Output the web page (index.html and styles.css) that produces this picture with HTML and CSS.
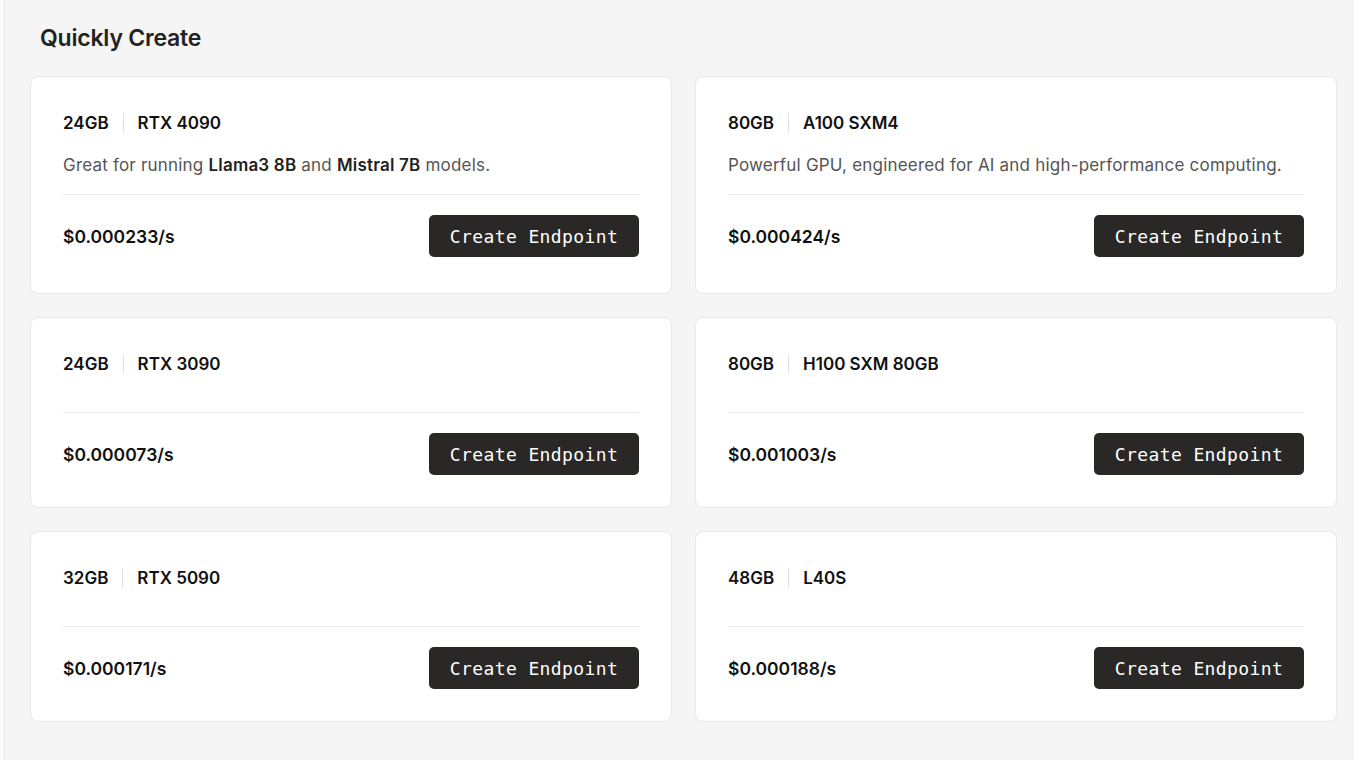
FILE: index.html
```html
<!DOCTYPE html>
<html lang="en">
<head>
  <meta charset="UTF-8">
  <meta name="viewport" content="width=device-width, initial-scale=1.0">
  <title>Quickly Create</title>
  <link rel="stylesheet" href="styles.css">
</head>
<body>

<div class="panel">
  <h2 class="panel-title">Quickly Create</h2>

  <div class="gpu-grid">
    <!-- row 1 -->
    <div class="gpu-card with-desc">
      <div class="gpu-head">
        <span class="gpu-mem">24GB</span>
        <span class="gpu-name">RTX 4090</span>
      </div>
      <p class="gpu-desc">Great for running <b>Llama3 8B</b> and <b>Mistral 7B</b> models.</p>
      <div class="gpu-foot">
        <span class="gpu-price">$0.000233/s</span>
        <button class="create-btn">Create Endpoint</button>
      </div>
    </div>

    <div class="gpu-card with-desc">
      <div class="gpu-head">
        <span class="gpu-mem">80GB</span>
        <span class="gpu-name">A100 SXM4</span>
      </div>
      <p class="gpu-desc">Powerful GPU, engineered for AI and high-performance computing.</p>
      <div class="gpu-foot">
        <span class="gpu-price">$0.000424/s</span>
        <button class="create-btn">Create Endpoint</button>
      </div>
    </div>

    <!-- row 2 -->
    <div class="gpu-card">
      <div class="gpu-head">
        <span class="gpu-mem">24GB</span>
        <span class="gpu-name">RTX 3090</span>
      </div>
      <p class="gpu-desc"></p>
      <div class="gpu-foot">
        <span class="gpu-price">$0.000073/s</span>
        <button class="create-btn">Create Endpoint</button>
      </div>
    </div>

    <div class="gpu-card">
      <div class="gpu-head">
        <span class="gpu-mem">80GB</span>
        <span class="gpu-name">H100 SXM 80GB</span>
      </div>
      <p class="gpu-desc"></p>
      <div class="gpu-foot">
        <span class="gpu-price">$0.001003/s</span>
        <button class="create-btn">Create Endpoint</button>
      </div>
    </div>

    <!-- row 3 -->
    <div class="gpu-card">
      <div class="gpu-head">
        <span class="gpu-mem">32GB</span>
        <span class="gpu-name">RTX 5090</span>
      </div>
      <p class="gpu-desc"></p>
      <div class="gpu-foot">
        <span class="gpu-price">$0.000171/s</span>
        <button class="create-btn">Create Endpoint</button>
      </div>
    </div>

    <div class="gpu-card">
      <div class="gpu-head">
        <span class="gpu-mem">48GB</span>
        <span class="gpu-name">L40S</span>
      </div>
      <p class="gpu-desc"></p>
      <div class="gpu-foot">
        <span class="gpu-price">$0.000188/s</span>
        <button class="create-btn">Create Endpoint</button>
      </div>
    </div>
  </div>
</div>

</body>
</html>
```

FILE: styles.css
```css
body {
  font-family: Inter, "Noto Sans", sans-serif;
  background-color: #fafafa;
  margin: 0;
  padding: 0 0 0 4px;
  color: #111;
  overflow: hidden;
}
.panel {
  background-color: #f5f5f5;
  border-left: 1px solid #e6e6e6;
  padding: 23px 17px 40px 25px;
  min-height: 760px;
  box-sizing: border-box;
}
.panel-title {
  margin: 0 0 23px 10px;
  font-size: 23px;
  line-height: 30px;
  font-weight: 600;
  color: #222;
  letter-spacing: -0.2px;
}
.gpu-grid {
  display: grid;
  grid-template-columns: 1fr 1fr;
  gap: 23px;
}
.gpu-card {
  background-color: #ffffff;
  border: 1px solid #e8e8e8;
  border-radius: 8px;
  padding: 34px 32px 32px 32px;
  display: flex;
  flex-direction: column;
  gap: 17px;
}
.gpu-card.with-desc {
  padding-bottom: 36px;
}
.gpu-head {
  display: flex;
  align-items: center;
  font-size: 17px;
  line-height: 24px;
  font-weight: 600;
}
.gpu-mem {
  padding-right: 14px;
  border-right: 1px solid #e2e2e2;
  line-height: 20px;
}
.gpu-name {
  padding-left: 14px;
}
.gpu-desc {
  margin: 2px 0 0;
  font-size: 17px;
  letter-spacing: 0.2px;
  line-height: 23px;
  color: #555;
}
.gpu-desc b {
  color: #222;
  font-weight: 600;
}
.gpu-foot {
  border-top: 1px solid #e8e8e8;
  padding-top: 20px;
  display: flex;
  align-items: center;
  justify-content: space-between;
}
.gpu-price {
  font-size: 17.5px;
  font-weight: 600;
}
.create-btn {
  width: 210px;
  height: 42px;
  background-color: #2a2826;
  color: #fff;
  border: none;
  border-radius: 5px;
  font-family: "DejaVu Sans Mono", "Liberation Mono", monospace;
  font-size: 18px;
  letter-spacing: 0.4px;
  cursor: pointer;
}
```
